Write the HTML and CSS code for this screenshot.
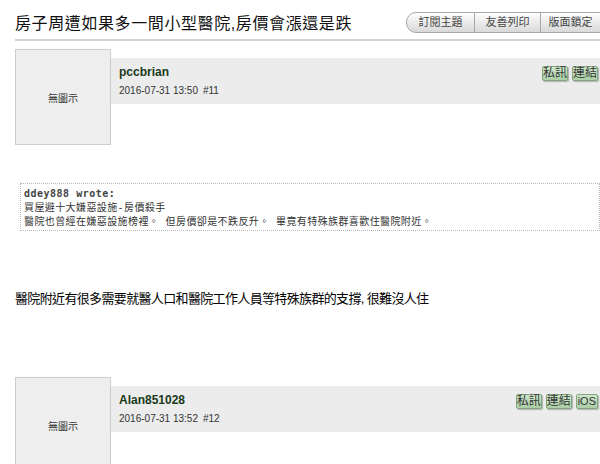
FILE: index.html
```html
<!DOCTYPE html>
<html lang="zh-Hant">
<head>
<meta charset="utf-8">
<title>房子周遭如果多一間小型醫院,房價會漲還是跌</title>
<link rel="stylesheet" href="styles.css">
</head>
<body>
<div class="page">
  <div class="topbar">
    <h1 class="title">房子周遭如果多一間小型醫院,房價會漲還是跌</h1>
    <div class="tools">
      <span class="tool tool-first">訂閱主題</span>
      <span class="tool tool-mid">友善列印</span>
      <span class="tool tool-last">版面鎖定</span>
    </div>
  </div>

  <div class="post">
    <div class="post-head">
      <div class="avatar">無圖示</div>
      <div class="bar">
        <div class="info">
          <div class="user">pccbrian</div>
          <div class="date">2016-07-31 13:50<span class="floor">#11</span></div>
        </div>
        <div class="actions">
          <span class="btn">私訊</span>
          <span class="btn">連結</span>
        </div>
      </div>
    </div>
    <div class="post-body">
      <div class="quote">
        <div class="who">ddey888 wrote:</div>
        <div>買屋避十大嫌惡設施-房價殺手</div>
        <div>醫院也曾經在嫌惡設施榜裡。 但房價卻是不跌反升。 畢竟有特殊族群喜歡住醫院附近。</div>
      </div>
      <div class="message">醫院附近有很多需要就醫人口和醫院工作人員等特殊族群的支撐, 很難沒人住</div>
    </div>
  </div>

  <div class="post post-next">
    <div class="post-head">
      <div class="avatar">無圖示</div>
      <div class="bar">
        <div class="info">
          <div class="user">Alan851028</div>
          <div class="date">2016-07-31 13:52<span class="floor">#12</span></div>
        </div>
        <div class="actions">
          <span class="btn">私訊</span>
          <span class="btn">連結</span>
          <span class="btn btn-latin">iOS</span>
        </div>
      </div>
    </div>
  </div>
</div>
</body>
</html>
```

FILE: styles.css
```css
html, body {
  margin: 0;
  padding: 0;
  background: #fff;
}
body {
  width: 600px;
  height: 464px;
  overflow: hidden;
  font-family: "Liberation Sans", Arial, "Noto Sans CJK TC", sans-serif;
  color: #222;
}
.topbar {
  display: flex;
  justify-content: space-between;
  align-items: flex-start;
  margin-left: 15px;
  height: 39px;
  border-bottom: 2px solid #d3d3d3;
}
.title {
  margin: 0;
  padding-top: 13px;
  font-size: 16px;
  line-height: 22px;
  font-weight: normal;
  letter-spacing: 0.6px;
  color: #111;
  white-space: nowrap;
}
.tools {
  display: flex;
  margin-top: 12px;
  flex-shrink: 0;
}
.tool {
  box-sizing: border-box;
  height: 21px;
  border: 1px solid #a8a8a8;
  border-left: none;
  background: linear-gradient(#fefefe, #e9e9e9 55%, #d9d9d9);
  font-size: 11px;
  line-height: 19px;
  color: #444;
  text-align: center;
  flex-shrink: 0;
}
.tool-first {
  width: 69px;
  border-left: 1px solid #a8a8a8;
  border-radius: 10px 0 0 10px;
}
.tool-mid {
  width: 66px;
}
.tool-last {
  width: 59px;
  border-right: none;
}
.post {
  padding-left: 15px;
  margin-top: 8px;
}
.post-next {
  margin-top: 69px;
}
.post-head {
  display: flex;
  align-items: flex-start;
}
.avatar {
  box-sizing: border-box;
  width: 96px;
  height: 96px;
  flex-shrink: 0;
  border: 1px solid #cdcdcd;
  background: #eeeeee;
  display: flex;
  align-items: center;
  justify-content: center;
  font-size: 10px;
  color: #333;
}
.bar {
  flex: 1;
  box-sizing: border-box;
  height: 46px;
  margin-top: 9px;
  padding: 6px 2px 0 8px;
  background: #ececec;
  display: flex;
  justify-content: space-between;
  align-items: flex-start;
}
.user {
  font-size: 12px;
  line-height: 16px;
  font-weight: bold;
  color: #1b3a1b;
}
.date {
  margin-top: 3px;
  font-size: 10px;
  line-height: 16px;
  color: #333;
}
.floor {
  margin-left: 5px;
}
.actions {
  display: flex;
  gap: 4px;
  margin-top: 2px;
}
.btn {
  box-sizing: border-box;
  height: 15px;
  padding: 0;
  border: 1px solid #82a67e;
  border-radius: 2px;
  background: linear-gradient(#cfe6cb, #abcfa6);
  box-shadow: 1px 1px 1px rgba(0, 0, 0, 0.25);
  font-size: 12px;
  line-height: 13px;
  color: #333;
  white-space: nowrap;
}
.btn-latin {
  padding: 0 1px;
  font-size: 11px;
}
.post-body {
  margin-top: 38px;
}
.quote {
  margin-left: 5px;
  border: 1px dotted #b8b8b8;
  padding: 3px 3px 1px;
  font-family: "DejaVu Sans Mono", "Noto Sans CJK TC", monospace;
  font-size: 10px;
  line-height: 14px;
  letter-spacing: 0.4px;
  color: #333;
  white-space: nowrap;
}
.who {
  font-weight: bold;
  letter-spacing: 0.5px;
  color: #444;
}
.message {
  margin-top: 59px;
  font-size: 13px;
  line-height: 18px;
  letter-spacing: -0.65px;
  color: #000;
  white-space: nowrap;
}
```
